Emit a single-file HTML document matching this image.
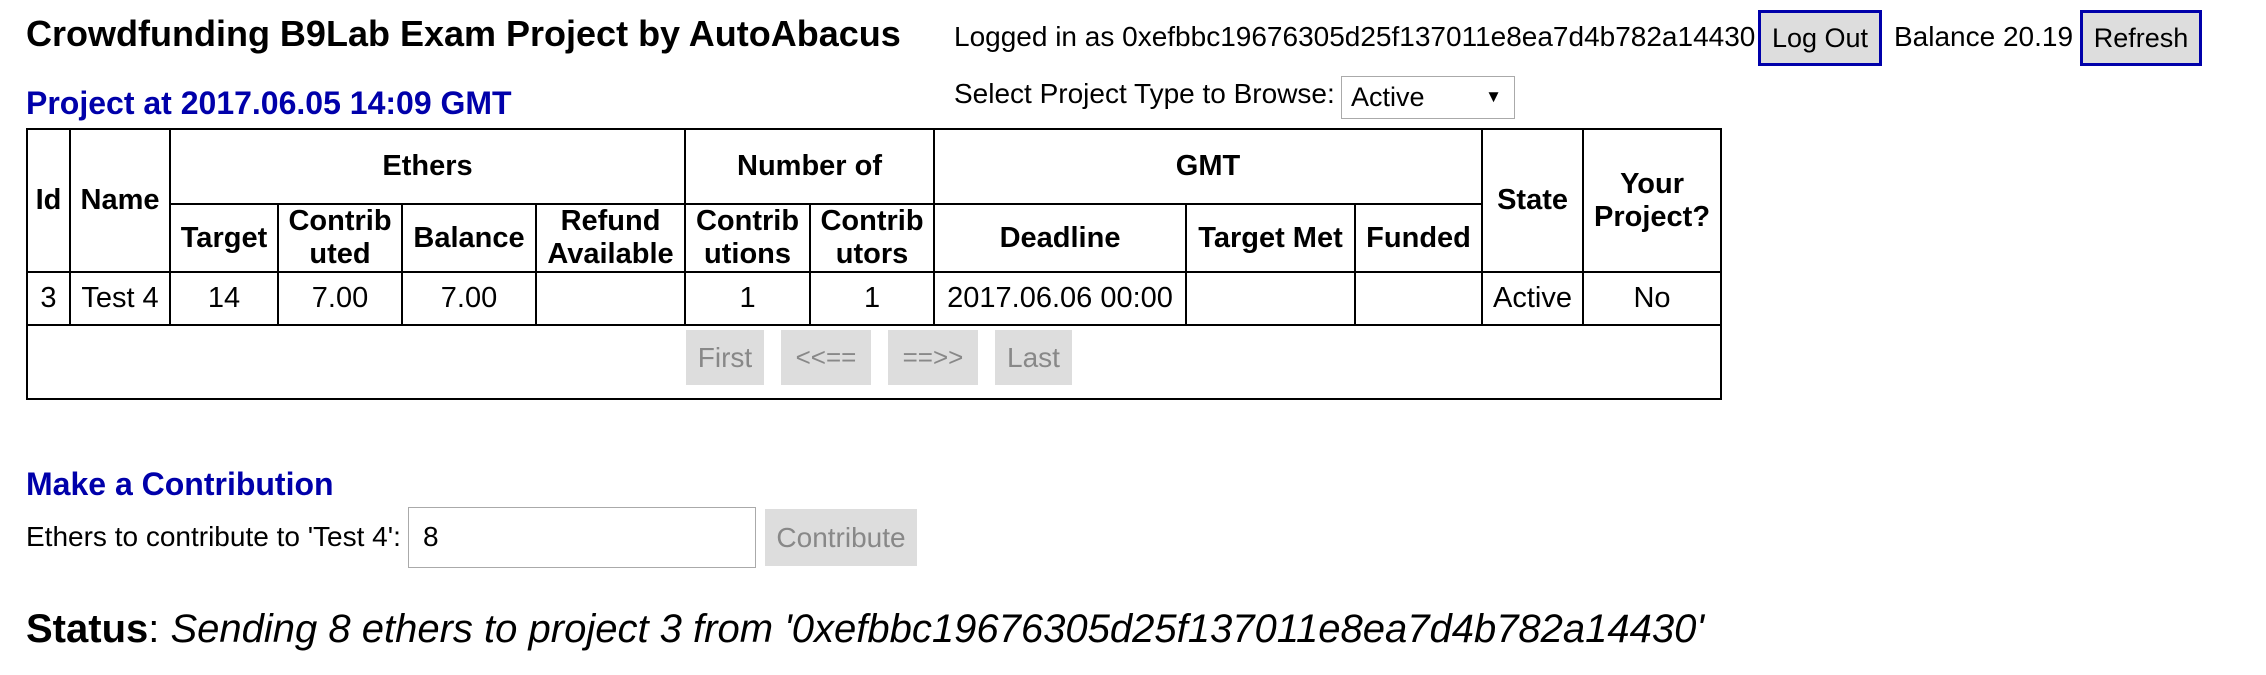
<!DOCTYPE html>
<html><head><meta charset="utf-8">
<style>
html,body{margin:0;padding:0;background:#fff;width:2266px;height:675px;overflow:hidden;font-family:"Liberation Sans",Arial,sans-serif;color:#000}
.a{position:absolute;white-space:nowrap}
.btn{position:absolute;box-sizing:border-box;background:#ddd;display:flex;align-items:center;justify-content:center}
table{position:absolute;left:26px;top:128px;width:1694px;border-collapse:collapse;table-layout:fixed;font-size:29px}
td,th{border:2px solid #000;text-align:center;padding:0;line-height:33px;overflow:hidden;white-space:nowrap}
th{font-weight:bold}
</style></head><body>
<div class="a" style="left:26px;top:13px;font-size:36px;font-weight:bold">Crowdfunding B9Lab Exam Project by AutoAbacus</div>
<div class="a" style="left:954px;top:21px;font-size:28px">Logged in as 0xefbbc19676305d25f137011e8ea7d4b782a14430</div>
<div class="btn" style="left:1758px;top:10px;width:124px;height:56px;border:3px solid #0000aa;font-size:27px">Log Out</div>
<div class="a" style="left:1894px;top:21px;font-size:28px">Balance 20.19</div>
<div class="btn" style="left:2080px;top:10px;width:122px;height:56px;border:3px solid #0000aa;font-size:27px">Refresh</div>
<div class="a" style="left:954px;top:78px;font-size:28px">Select Project Type to Browse:</div>
<div class="a" style="left:1341px;top:76px;width:174px;height:43px;box-sizing:border-box;border:1px solid #aaa;font-size:27px;padding:5px 0 0 9px">Active<span style="position:absolute;right:12px;top:10px;font-size:17px">▼</span></div>
<div class="a" style="left:26px;top:85px;font-size:32px;font-weight:bold;color:#0000aa">Project at 2017.06.05 14:09 GMT</div>
<table>
<colgroup><col style="width:43px"><col style="width:100px"><col style="width:108px"><col style="width:124px"><col style="width:134px"><col style="width:149px"><col style="width:125px"><col style="width:124px"><col style="width:252px"><col style="width:169px"><col style="width:127px"><col style="width:101px"><col style="width:138px"></colgroup>
<tr style="height:75px"><th rowspan="2">Id</th><th rowspan="2">Name</th><th colspan="4">Ethers</th><th colspan="2">Number of</th><th colspan="3">GMT</th><th rowspan="2">State</th><th rowspan="2">Your<br>Project?</th></tr>
<tr style="height:64px"><th>Target</th><th>Contrib<br>uted</th><th>Balance</th><th>Refund<br>Available</th><th>Contrib<br>utions</th><th>Contrib<br>utors</th><th>Deadline</th><th>Target Met</th><th>Funded</th></tr>
<tr style="height:53px"><td>3</td><td>Test 4</td><td>14</td><td>7.00</td><td>7.00</td><td></td><td>1</td><td>1</td><td>2017.06.06 00:00</td><td></td><td></td><td>Active</td><td>No</td></tr>
<tr style="height:74px"><td colspan="13"></td></tr>
</table>
<div class="btn" style="left:686px;top:330px;width:78px;height:55px;color:#888;font-size:28px">First</div>
<div class="btn" style="left:781px;top:330px;width:90px;height:55px;color:#888;font-size:26px">&lt;&lt;==</div>
<div class="btn" style="left:888px;top:330px;width:90px;height:55px;color:#888;font-size:26px">==&gt;&gt;</div>
<div class="btn" style="left:995px;top:330px;width:77px;height:55px;color:#888;font-size:28px">Last</div>
<div class="a" style="left:26px;top:466px;font-size:32px;font-weight:bold;color:#0000aa">Make a Contribution</div>
<div class="a" style="left:26px;top:521px;font-size:28px">Ethers to contribute to 'Test 4':</div>
<div class="a" style="left:408px;top:507px;width:348px;height:61px;box-sizing:border-box;border:1px solid #aaa;font-size:28px;padding:13px 0 0 14px">8</div>
<div class="btn" style="left:765px;top:509px;width:152px;height:57px;color:#888;font-size:28px">Contribute</div>
<div class="a" style="left:26px;top:607px;font-size:40px"><b>Status</b>: <i>Sending 8 ethers to project 3 from '0xefbbc19676305d25f137011e8ea7d4b782a14430'</i></div>
</body></html>
